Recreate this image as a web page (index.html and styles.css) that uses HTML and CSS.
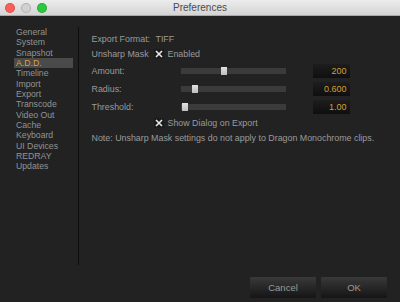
FILE: index.html
```html
<!DOCTYPE html>
<html lang="en">
  <head>
    <meta charset="UTF-8" />
    <title>Preferences</title>
    <link rel="stylesheet" href="styles.css">
  </head>
  <body>
    <!-- Window title bar -->
    <div class="titlebar">
      <div class="lights">
        <span class="light red"></span>
        <span class="light gray"></span>
        <span class="light green"></span>
      </div>
      <div class="title">Preferences</div>
    </div>

    <div class="main">
      <!-- Category list -->
      <ul class="sidebar">
        <li>General</li>
        <li>System</li>
        <li>Snapshot</li>
        <li class="active">A.D.D.</li>
        <li>Timeline</li>
        <li>Import</li>
        <li>Export</li>
        <li>Transcode</li>
        <li>Video Out</li>
        <li>Cache</li>
        <li>Keyboard</li>
        <li>UI Devices</li>
        <li>REDRAY</li>
        <li>Updates</li>
      </ul>

      <!-- A.D.D. settings -->
      <div class="content">
        <div class="row">
          <span class="label short">Export Format:</span>
          <span>TIFF</span>
        </div>
        <div class="row">
          <span class="label check-label">Unsharp Mask</span>
          <span class="checkbox">
            <svg width="10" height="10" viewBox="0 0 10 10"><path d="M2 2 L8 8 M8 2 L2 8" /></svg>
          </span>
          <span>Enabled</span>
        </div>

        <div class="slider-row">
          <span class="label">Amount:</span>
          <div class="track"><span class="thumb" style="left: 40px"></span></div>
          <div class="value">200</div>
        </div>
        <div class="slider-row">
          <span class="label">Radius:</span>
          <div class="track"><span class="thumb" style="left: 11px"></span></div>
          <div class="value">0.600</div>
        </div>
        <div class="slider-row">
          <span class="label">Threshold:</span>
          <div class="track"><span class="thumb" style="left: 1px"></span></div>
          <div class="value">1.00</div>
        </div>

        <div class="row indent">
          <span class="checkbox">
            <svg width="10" height="10" viewBox="0 0 10 10"><path d="M2 2 L8 8 M8 2 L2 8" /></svg>
          </span>
          <span>Show Dialog on Export</span>
        </div>
        <div class="row">
          Note: Unsharp Mask settings do not apply to Dragon Monochrome clips.
        </div>
      </div>
    </div>

    <!-- Dialog buttons -->
    <div class="footer">
      <button>Cancel</button>
      <button>OK</button>
    </div>
  </body>
</html>
```

FILE: styles.css
```css
body {
  font-family: "Liberation Sans", Arial, sans-serif;
  background: #222222;
  margin: 0;
  padding: 0;
  height: 302px;
  display: flex;
  flex-direction: column;
  overflow: hidden;
}

/* Title bar */
.titlebar {
  height: 15px;
  background: linear-gradient(#ececec, #d4d4d4);
  border-bottom: 1px solid #a9a9a9;
  display: flex;
  align-items: center;
  justify-content: center;
  position: relative;
}

.lights {
  position: absolute;
  left: 5px;
  top: 3px;
  display: flex;
  gap: 6px;
}

.light {
  width: 8px;
  height: 8px;
  border-radius: 50%;
  border: 0.5px solid rgba(0, 0, 0, 0.15);
}

.red {
  background: #fc5f57;
}

.gray {
  background: #d0d0d0;
}

.green {
  background: #2bc840;
}

.title {
  font-size: 10px;
  color: #4b4b4b;
}

/* Sidebar + content */
.main {
  height: 249px;
  display: flex;
}

.sidebar {
  list-style: none;
  margin: 11px 0 0 0;
  padding: 0 5px 0 14px;
  width: 59px;
  border-right: 1px solid #0d0d0d;
  font-size: 8.7px;
  color: #939393;
}

.sidebar li {
  height: 10.33px;
  line-height: 10.33px;
  padding-left: 2px;
}

.sidebar li.active {
  background: #4a4a4a;
  color: #dda236;
}

.content {
  flex-grow: 1;
  padding: 15.5px 0 0 12.5px;
  font-size: 8.87px;
  color: #9b9b9b;
}

.row {
  height: 15px;
  display: flex;
  align-items: center;
}

.label.short {
  width: 64px;
}

.label.check-label {
  width: 62px;
}

.indent {
  padding-left: 62px;
}

.checkbox {
  width: 10px;
  height: 10px;
  margin-right: 4px;
  background: #1b1b1b;
  display: flex;
}

.checkbox svg {
  stroke: #e8e8e8;
  stroke-width: 1.6;
}

.slider-row {
  height: 18px;
  display: flex;
  align-items: center;
}

.slider-row .label {
  width: 89px;
}

.track {
  width: 105px;
  height: 6px;
  background: #3b3b3b;
  position: relative;
}

.thumb {
  position: absolute;
  top: -1px;
  width: 6px;
  height: 8px;
  background: linear-gradient(#e2e2e2, #bdbdbd);
}

.value {
  margin-left: 27px;
  width: 34px;
  height: 14px;
  padding-right: 3px;
  background: linear-gradient(#1d1d1d, #0f0f0f);
  color: #d69f35;
  font-size: 9px;
  line-height: 14px;
  text-align: right;
}

/* Buttons */
.footer {
  flex-grow: 1;
  display: flex;
  justify-content: flex-end;
  align-items: flex-start;
  gap: 5px;
  padding: 11.7px 13px 0 0;
}

button {
  width: 66px;
  height: 21px;
  border: none;
  border-radius: 1px;
  background: linear-gradient(#393939, #151515);
  color: #9a9a9a;
  font-family: "Liberation Sans", Arial, sans-serif;
  font-size: 9.5px;
  padding: 0;
}
```
